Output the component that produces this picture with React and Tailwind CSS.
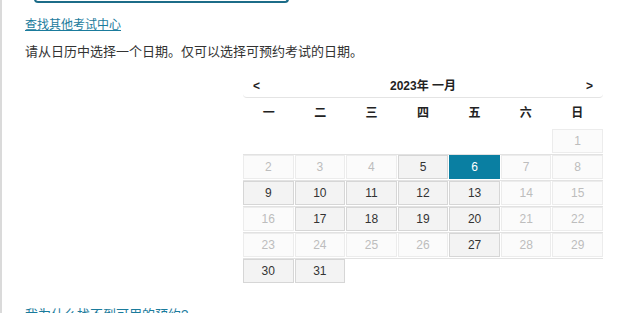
import React from "react";

const available = new Set([5, 6, 9, 10, 11, 12, 13, 17, 18, 19, 20, 27, 30, 31]);
const selected = 6;

function buildWeeks() {
  const cells = [];
  for (let i = 0; i < 6; i++) cells.push(null);
  for (let d = 1; d <= 31; d++) cells.push(d);
  while (cells.length % 7 !== 0) cells.push(null);
  const weeks = [];
  for (let i = 0; i < cells.length; i += 7) weeks.push(cells.slice(i, i + 7));
  return weeks;
}

function Cell({ d }) {
  if (d === null) return <div className="h-[24px]" />;
  if (d === selected)
    return (
      <div className="h-[24px] flex items-center justify-center bg-[#0a7fa2] border border-[#0a7fa2] text-white text-[12px]">
        {d}
      </div>
    );
  if (available.has(d))
    return (
      <div className="h-[24px] flex items-center justify-center bg-[#f3f3f3] border border-[#d6d6d6] text-[#333] text-[12px]">
        {d}
      </div>
    );
  return (
    <div className="h-[24px] flex items-center justify-center bg-[#fbfbfb] border border-[#ececec] text-[#bdbdbd] text-[12px]">
      {d}
    </div>
  );
}

export default function App() {
  const weeks = buildWeeks();
  const days = ["一", "二", "三", "四", "五", "六", "日"];
  return (
    <div
      className="h-[313px] overflow-hidden bg-white border-l-2 border-[#dadada]"
      style={{ fontFamily: '"Liberation Sans", Arial, "Noto Sans CJK SC", sans-serif' }}
    >
      <div className="ml-[32px] w-[255px] h-[4px] -mt-[1px] border-2 border-t-0 border-[#1c6c88] rounded-b-[6px]" />
      <div className="pl-[23px]">
        <a href="#" className="block mt-[13px] text-[12px] leading-[18px] text-[#1a7b9c] underline w-fit">
          查找其他考试中心
        </a>
        <p className="mt-[9px] text-[13px] leading-[18px] text-[#333]">
          请从日历中选择一个日期。仅可以选择可预约考试的日期。
        </p>
        <div className="ml-[218px] mt-[14px] w-[360px]">
          <div className="h-[23px] flex items-center justify-between px-[10px] border-b border-[#e4e4e4] rounded-b-[4px] text-[12px] font-bold text-[#222]">
            <span>&lt;</span>
            <span>2023年 一月</span>
            <span>&gt;</span>
          </div>
          <div className="grid grid-cols-7 h-[31px] items-center pb-[2px]">
            {days.map((d) => (
              <div key={d} className="text-center text-[12px] font-bold text-[#222]">
                {d}
              </div>
            ))}
          </div>
          {weeks.map((w, i) => (
            <div
              key={i}
              className={"grid grid-cols-7 gap-x-px pb-px " + (i > 0 ? "border-t border-[#e2e2e2]" : "")}
            >
              {w.map((d, j) => (
                <Cell key={j} d={d} />
              ))}
            </div>
          ))}
        </div>
        <a href="#" className="block mt-[22px] text-[13px] leading-[18px] text-[#1a7b9c] underline w-fit">
          我为什么找不到可用的预约?
        </a>
      </div>
    </div>
  );
}
